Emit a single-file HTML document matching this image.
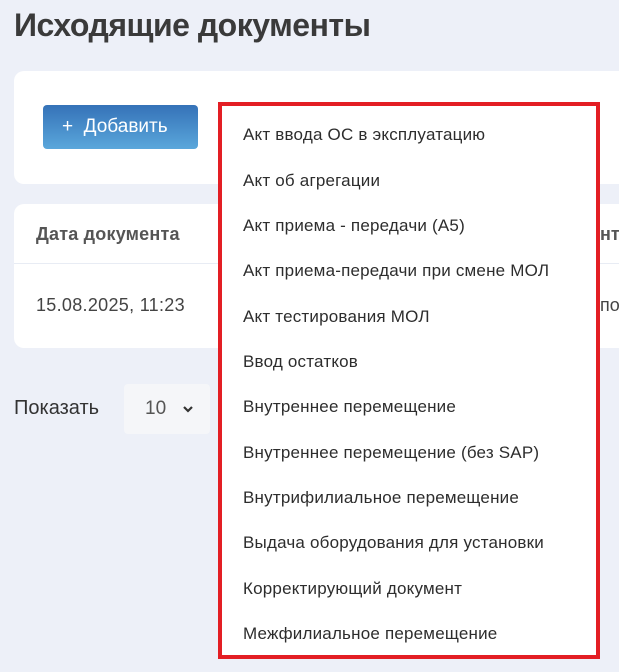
<!DOCTYPE html>
<html><head><meta charset="utf-8"><style>
*{box-sizing:border-box;margin:0;padding:0}
body{width:619px;height:672px;overflow:hidden;background:#edf0f8;font-family:"Liberation Sans",sans-serif;color:#333;position:relative}
h1{position:absolute;left:14px;top:7px;font-size:32px;font-weight:bold;color:#3a3a3a;letter-spacing:-0.5px}
.card{position:absolute;background:#fff;border-radius:10px}
.btn{position:absolute;left:43px;top:105px;width:155px;height:44px;border-radius:4px;background:linear-gradient(#3572b8,#5aa7db);color:#fff;font-size:19px;line-height:44px;padding-left:19px}
.th{position:absolute;left:36px;top:224px;font-size:18px;font-weight:bold;color:#555;letter-spacing:0.2px}
.td{position:absolute;left:36px;top:295px;font-size:18px;color:#444;letter-spacing:0.3px}
.sel{position:absolute;left:124px;top:384px;width:86px;height:50px;background:#f5f6f9;border-radius:4px;font-size:19px;color:#555;line-height:50px;padding-left:21px}
.dd{position:absolute;left:218px;top:102px;width:382px;height:557px;background:#fff;border:4px solid #e31e24}
.dd div{position:absolute;left:21px;font-size:17px;color:#2d2d2d;white-space:nowrap;letter-spacing:0.2px}
</style></head><body>
<h1>Исходящие документы</h1>
<div class="card" style="left:14px;top:71px;width:640px;height:113px"></div>
<div class="btn">+&nbsp;&nbsp;Добавить</div>
<div class="card" style="left:14px;top:204px;width:640px;height:144px"></div>
<div style="position:absolute;left:14px;top:263px;width:620px;height:1px;background:#e8ecf4"></div>
<div class="th">Дата документа</div>
<div class="td">15.08.2025, 11:23</div>
<div style="position:absolute;left:600px;top:224px;font-size:18px;font-weight:bold;color:#555">нт</div>
<div style="position:absolute;left:600px;top:295px;font-size:18px;color:#444">по</div>
<div style="position:absolute;left:14px;top:397px;font-size:20px;color:#333">Показать</div>
<div class="sel">10 <svg width="12" height="8" viewBox="0 0 12 8" style="position:absolute;left:58px;top:21px"><path d="M2 2l4 4 4-4" stroke="#333" stroke-width="2.2" fill="none"/></svg></div>
<div class="dd">
<div style="top:19px">Акт ввода ОС в эксплуатацию</div>
<div style="top:65px">Акт об агрегации</div>
<div style="top:110px">Акт приема - передачи (А5)</div>
<div style="top:155px">Акт приема-передачи при смене МОЛ</div>
<div style="top:201px">Акт тестирования МОЛ</div>
<div style="top:246px">Ввод остатков</div>
<div style="top:291px">Внутреннее перемещение</div>
<div style="top:337px">Внутреннее перемещение (без SAP)</div>
<div style="top:382px">Внутрифилиальное перемещение</div>
<div style="top:427px">Выдача оборудования для установки</div>
<div style="top:473px">Корректирующий документ</div>
<div style="top:518px">Межфилиальное перемещение</div>
</div>
</body></html>
